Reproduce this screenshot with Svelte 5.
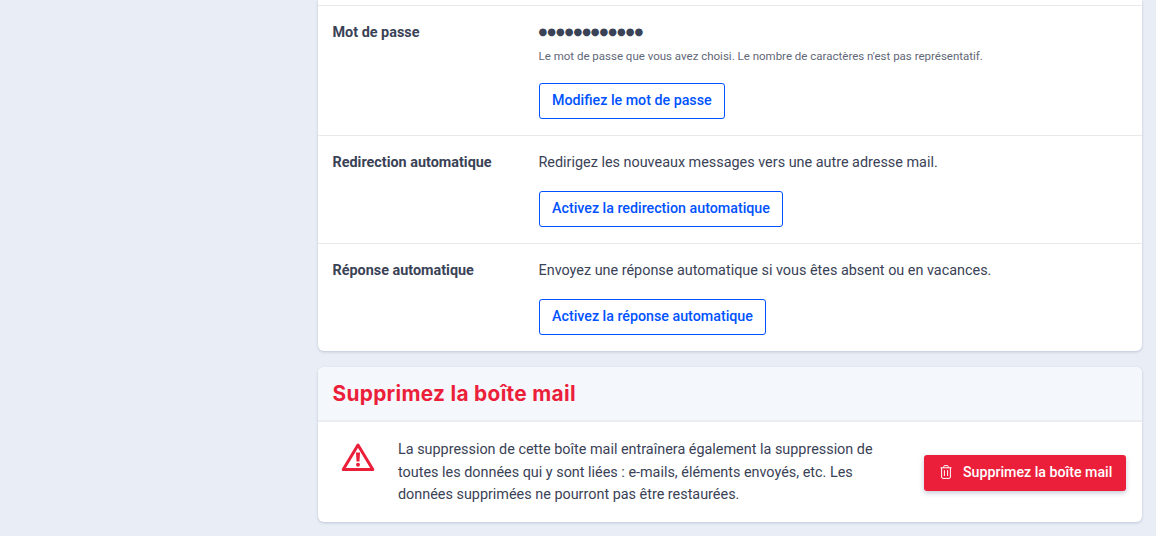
<script>
  const rows = [
    {label: 'Redirection automatique', text: 'Redirigez les nouveaux messages vers une autre adresse mail.', action: 'Activez la redirection automatique'},
    {label: 'Réponse automatique', text: 'Envoyez une réponse automatique si vous êtes absent ou en vacances.', action: 'Activez la réponse automatique'}
  ]
</script>

<div class="page">
  <main class="content">
    <section class="card">
      <div class="clip"></div>
      <div class="row">
        <div class="label">Mot de passe</div>
        <div class="value">
          <div class="dots">●●●●●●●●●●●●</div>
          <p class="hint">Le mot de passe que vous avez choisi. Le nombre de caractères n'est pas représentatif.</p>
          <button class="outline">Modifiez le mot de passe</button>
        </div>
      </div>
      {#each rows as row}
        <div class="row">
          <div class="label">{row.label}</div>
          <div class="value">
            <p class="text">{row.text}</p>
            <button class="outline">{row.action}</button>
          </div>
        </div>
      {/each}
    </section>

    <section class="card danger">
      <h2>Supprimez la boîte mail</h2>
      <div class="danger-body">
        <svg class="warn" width="34" height="30" viewBox="0 0 34 30" fill="none">
          <path d="M17 3 L31.8 27.6 H2.2 Z" stroke="#ec1f3b" stroke-width="3" stroke-linejoin="round"/>
          <path d="M15 10.5 H19 L18.5 19.5 H15.5 Z" fill="#ec1f3b"/>
          <circle cx="17" cy="22.8" r="2" fill="#ec1f3b"/>
        </svg>
        <p>La suppression de cette boîte mail entraînera également la suppression de toutes les données qui y sont liées : e-mails, éléments envoyés, etc. Les données supprimées ne pourront pas être restaurées.</p>
        <button class="solid">
          <svg width="12" height="14" viewBox="0 0 12 14" fill="none" stroke="#fff" stroke-width="1">
            <path d="M0.5 2.8 H11.5 M3.8 2.8 V1.4 Q3.8 0.6 4.6 0.6 H7.4 Q8.2 0.6 8.2 1.4 V2.8 M1.6 2.8 V12 Q1.6 13.4 3 13.4 H9 Q10.4 13.4 10.4 12 V2.8 M4.4 5.2 V11 M7.6 5.2 V11"/>
          </svg>
          Supprimez la boîte mail
        </button>
      </div>
    </section>
  </main>
</div>

<style>
  :global(body) {
    background: #e9eef6;
  }
  .page {
    height: 536px;
    overflow: hidden;
    font-family: Roboto, "Liberation Sans", sans-serif;
    color: #3a4256;
  }
  .content {
    margin-left: 318px;
    width: 824px;
  }
  .card {
    background: #fff;
    border-radius: 0 0 6px 6px;
    box-shadow: 0 1px 3px rgba(60, 80, 120, 0.25);
  }
  .clip {
    height: 5px;
  }
  .row {
    display: flex;
    border-top: 1px solid #e8e9eb;
    padding: 17px 14px 16px 14.5px;
  }
  .label {
    width: 206px;
    flex: none;
    font-size: 14.4px;
    font-weight: 700;
    line-height: 20px;
  }
  .value {
    flex: 1;
    font-size: 14.4px;
    line-height: 20px;
  }
  .dots {
    margin-top: -1px;
    font-size: 10px;
    line-height: 20px;
    font-family: "DejaVu Sans", sans-serif;
  }
  .hint {
    margin: 6px 0 19px;
    font-size: 11.5px;
    line-height: 16px;
    color: #5f6778;
  }
  .text {
    margin: 0 0 18px;
  }
  button {
    font-family: inherit;
    font-size: 14.25px;
    font-weight: 500;
    border-radius: 3px;
    cursor: pointer;
  }
  .outline {
    display: block;
    height: 36px;
    padding: 0 12.5px 2px;
    background: #fff;
    border: 1px solid #0052ff;
    color: #0052ff;
  }
  .danger {
    margin-top: 16px;
    border-radius: 6px;
  }
  h2 {
    margin: 0;
    height: 55px;
    padding: 0 14.5px;
    display: flex;
    align-items: center;
    background: #f4f7fb;
    border-bottom: 2px solid #ebedf0;
    box-sizing: border-box;
    border-radius: 6px 6px 0 0;
    color: #ec1f3b;
    font-family: Inter, sans-serif;
    font-size: 20.8px;
    font-weight: 700;
    letter-spacing: 0.32px;
  }
  .danger-body {
    display: flex;
    align-items: center;
    padding: 0 16px 0 23px;
    height: 100px;
    box-sizing: border-box;
  }
  .warn {
    flex: none;
    margin-bottom: 30px;
  }
  .danger-body p {
    margin: 2px 0 0 23px;
    width: 490px;
    font-size: 14.4px;
    line-height: 22.5px;
  }
  .solid {
    margin: 2px 0 0 auto;
    height: 36px;
    width: 202px;
    padding: 0 0 2px 16px;
    display: flex;
    align-items: center;
    gap: 11px;
    background: #ec1f3b;
    border: none;
    color: #fff;
    font-size: 14.2px;
    box-shadow: 0 2px 5px rgba(60, 80, 120, 0.3);
  }
</style>
